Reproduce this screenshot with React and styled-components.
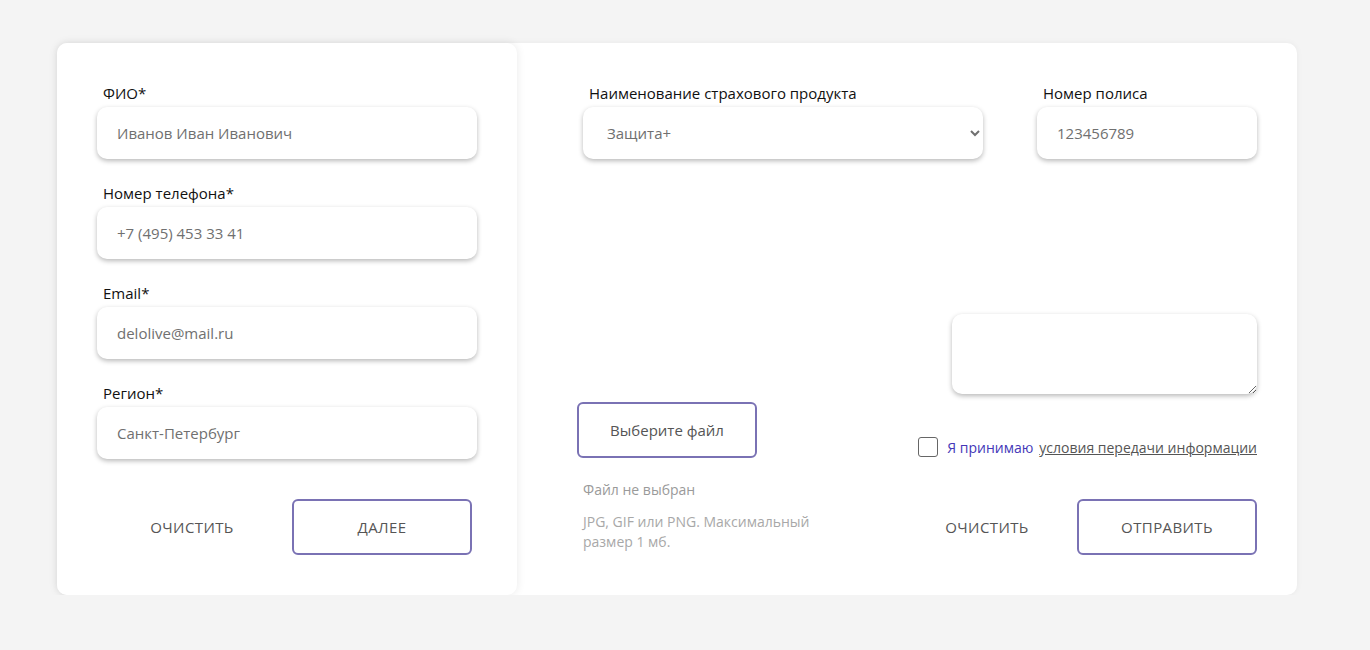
import React from "react"
import styled, { createGlobalStyle } from "styled-components"

const GlobalStyle = createGlobalStyle`
  body {
    margin: 0;
    background: #f4f4f4;
    font-family: "Open Sans", "Noto Sans", sans-serif;
  }
  * { box-sizing: border-box; }
`

const leftFields = [
  { label: "ФИО*", value: "Иванов Иван Иванович" },
  { label: "Номер телефона*", value: "+7 (495) 453 33 41" },
  { label: "Email*", value: "delolive@mail.ru" },
  { label: "Регион*", value: "Санкт-Петербург" },
]

export default function App() {
  return (
    <>
      <GlobalStyle />
      <Card>
        <LeftPanel>
          {leftFields.map(f => (
            <Field key={f.label}>
              <Label>{f.label}</Label>
              <Input defaultValue={f.value} />
            </Field>
          ))}
          <Actions $gap="10px" $pad="5px" $top="15px">
            <TextButton>Очистить</TextButton>
            <OutlineButton>Далее</OutlineButton>
          </Actions>
        </LeftPanel>

        <RightPanel>
          <TopRow>
            <Field $width="400px" $shift="6px">
              <Label>Наименование страхового продукта</Label>
              <Select defaultValue="z">
                <option value="z">Защита+</option>
              </Select>
            </Field>
            <Field $width="220px">
              <Label>Номер полиса</Label>
              <Input defaultValue="123456789" />
            </Field>
          </TopRow>

          <BottomRow>
            <FileColumn>
              <FileButton>Выберите файл</FileButton>
              <FileName>Файл не выбран</FileName>
              <Hint>
                JPG, GIF или PNG. Максимальный
                <br />
                размер 1 мб.
              </Hint>
            </FileColumn>
            <SubmitColumn>
              <Comment />
              <Agree>
                <Check type="checkbox" />
                <Accept>Я принимаю</Accept>
                <Terms href="#">условия передачи информации</Terms>
              </Agree>
              <Actions $gap="0" $pad="0" $top="42px">
                <TextButton>Очистить</TextButton>
                <OutlineButton>Отправить</OutlineButton>
              </Actions>
            </SubmitColumn>
          </BottomRow>
        </RightPanel>
      </Card>
    </>
  )
}

const Card = styled.div`
  display: flex;
  width: 1240px;
  height: 552px;
  margin: 43px 0 0 57px;
  background: #fff;
  border-radius: 10px;
  box-shadow: 0 0 6px rgba(0, 0, 0, 0.05);
`

const LeftPanel = styled.div`
  width: 460px;
  padding: 41px 40px 0;
  border-radius: 10px;
  background: #fff;
  box-shadow: 0 0 10px rgba(0, 0, 0, 0.09);
  display: flex;
  flex-direction: column;
  gap: 25px;
`

const RightPanel = styled.div`
  flex: 1;
  padding: 41px 40px 40px 60px;
  display: flex;
  flex-direction: column;
  justify-content: space-between;
`

const Field = styled.div`
  display: flex;
  flex-direction: column;
  gap: 5px;
  width: ${p => p.$width || "auto"};
  margin-left: ${p => p.$shift || "0"};
`

const Label = styled.label`
  padding-left: 6px;
  font-size: 15px;
  line-height: 18px;
  color: #111;
`

const fieldBox = `
  height: 52px;
  width: 100%;
  border: none;
  border-radius: 10px;
  background: #fff;
  box-shadow: 0 2px 5px rgba(0, 0, 0, 0.28);
  font-family: "Open Sans", "Noto Sans", sans-serif;
  font-size: 15px;
  color: #707070;
  outline: none;
`

const Input = styled.input`
  ${fieldBox}
  padding: 0 20px;
`

const Select = styled.select`
  ${fieldBox}
  padding: 0 20px;
`

const Actions = styled.div`
  display: flex;
  justify-content: flex-end;
  gap: ${p => p.$gap};
  padding-right: ${p => p.$pad};
  margin-top: ${p => p.$top};
`

const buttonText = `
  font-family: "Open Sans", "Noto Sans", sans-serif;
  font-size: 15px;
  letter-spacing: 0.4px;
  text-transform: uppercase;
  color: #555;
  background: #fff;
  cursor: pointer;
`

const TextButton = styled.button`
  ${buttonText}
  width: 180px;
  height: 56px;
  border: none;
`

const OutlineButton = styled.button`
  ${buttonText}
  width: 180px;
  height: 56px;
  border: 2px solid #7a72b4;
  border-radius: 6px;
`

const TopRow = styled.div`
  display: flex;
  justify-content: space-between;
`

const BottomRow = styled.div`
  display: flex;
  justify-content: space-between;
  align-items: flex-end;
`

const FileColumn = styled.div`
  display: flex;
  flex-direction: column;
  padding-bottom: 3px;
`

const FileButton = styled.button`
  ${buttonText}
  text-transform: none;
  letter-spacing: 0;
  width: 180px;
  height: 56px;
  border: 2px solid #7a72b4;
  border-radius: 6px;
`

const FileName = styled.div`
  margin: 22px 0 0 6px;
  font-size: 14px;
  line-height: 20px;
  color: #9a9a9a;
`

const Hint = styled.div`
  margin: 12px 0 0 6px;
  font-size: 14px;
  line-height: 20px;
  color: #a8a8a8;
`

const SubmitColumn = styled.div`
  display: flex;
  flex-direction: column;
  align-items: flex-end;
`

const Comment = styled.textarea`
  ${fieldBox}
  width: 305px;
  height: 80px;
  padding: 10px 20px;
`

const Agree = styled.div`
  display: flex;
  align-items: center;
  height: 20px;
  margin-top: 43px;
  font-size: 14px;
`

const Check = styled.input`
  appearance: none;
  width: 20px;
  height: 20px;
  margin: 0 9px 0 0;
  border: 1px solid #666;
  border-radius: 3px;
  background: #fff;
`

const Accept = styled.span`
  color: #4437b8;
  font-weight: 500;
  margin-right: 6px;
`

const Terms = styled.a`
  color: #555;
  text-decoration: underline;
`
